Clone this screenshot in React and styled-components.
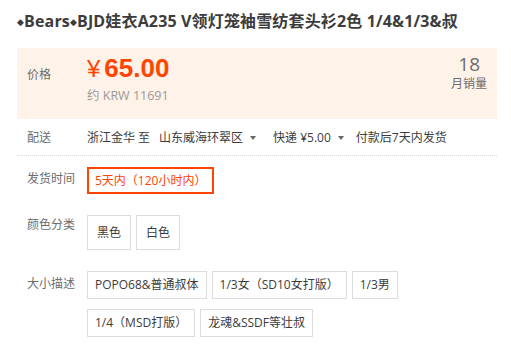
import React from 'react';
import styled, { createGlobalStyle } from 'styled-components';

const GlobalStyle = createGlobalStyle`
    body{
        margin: 0;
        background: #fff;
        font-family: "Open Sans", "Noto Sans CJK SC", sans-serif;
        font-size: 12px;
        color: #3c3c3c;
    }
`;

const sizes = ['POPO68&普通叔体', '1/3女（SD10女打版）', '1/3男', '1/4（MSD打版）', '龙魂&SSDF等壮叔'];

function App() {
    return (
        <>
            <GlobalStyle />
            <Wrap>
                <Title>
                    <Diamond>◆</Diamond>Bears<Diamond>◆</Diamond>BJD娃衣A235 V领灯笼袖雪纺套头衫2色 1/4&amp;1/3&amp;叔
                </Title>
                <PriceBox>
                    <Label pt={18}>价格</Label>
                    <PriceCol>
                        <Price><Rmb>¥</Rmb>65.00</Price>
                        <Krw>约 KRW 11691</Krw>
                    </PriceCol>
                    <Sales>
                        <SalesNum>18</SalesNum>
                        <SalesTxt>月销量</SalesTxt>
                    </Sales>
                </PriceBox>
                <DeliveryRow>
                    <Label>配送</Label>
                    <DeliveryText>
                        <span>浙江金华</span>
                        <To>至</To>
                        <span>山东威海环翠区</span>
                        <Caret />
                        <Express>快递 ¥5.00</Express>
                        <Caret />
                        <Promise>付款后7天内发货</Promise>
                    </DeliveryText>
                </DeliveryRow>
                <Row pt={11}>
                    <Label pt={3}>发货时间</Label>
                    <TimeBox>5天内（120小时内）</TimeBox>
                </Row>
                <Row pt={21}>
                    <Label pt={1}>颜色分类</Label>
                    <Options>
                        <Option big>黑色</Option>
                        <Option big>白色</Option>
                    </Options>
                </Row>
                <Row pt={21}>
                    <Label pt={4}>大小描述</Label>
                    <Options>
                        {sizes.map((s, i) => (
                            <Option key={i}>{s}</Option>
                        ))}
                    </Options>
                </Row>
            </Wrap>
        </>
    );
}

export default App;

const Wrap = styled.div`
    width: 480px;
    padding-left: 17px;
`;

const Title = styled.h1`
    margin: 0;
    padding-top: 10px;
    font-size: 16px;
    line-height: 22px;
    font-weight: 700;
    letter-spacing: 0.15px;
    color: #3c3c3c;
    white-space: nowrap;
`;

const Diamond = styled.span`
    font-family: "DejaVu Sans", sans-serif;
    font-size: 9px;
    vertical-align: 2px;
`;

const PriceBox = styled.div`
    display: flex;
    margin-top: 15px;
    height: 71px;
    padding-right: 10px;
    background: #fff2e8;
`;

const Label = styled.div`
    flex: none;
    width: 60px;
    padding-left: 10px;
    padding-top: ${p => p.pt || 0}px;
    line-height: 18px;
    color: #6c6c6c;
`;

const PriceCol = styled.div`
    display: flex;
    flex-direction: column;
    padding-top: 5px;
`;

const Price = styled.div`
    font-family: "Liberation Sans", Arial, sans-serif;
    font-size: 26px;
    line-height: 30px;
    font-weight: 700;
    color: #ff4400;
`;

const Rmb = styled.span`
    font-size: 24px;
    font-weight: 400;
    margin-right: 4px;
`;

const Krw = styled.div`
    margin-top: 3px;
    line-height: 18px;
    font-size: 12.5px;
    color: #999;
`;

const Sales = styled.div`
    margin-left: auto;
    padding-top: 5px;
    text-align: right;
    color: #6c6c6c;
`;

const SalesNum = styled.div`
    font-size: 19px;
    line-height: 22px;
    padding-right: 7px;
`;

const SalesTxt = styled.div`
    line-height: 18px;
`;

const DeliveryRow = styled.div`
    display: flex;
    padding: 10px 0 8px;
    border-bottom: 1px dotted #d9d9d9;
    line-height: 18px;
`;

const DeliveryText = styled.div`
    display: flex;
    align-items: center;
    white-space: nowrap;
`;

const To = styled.span`
    margin: 0 9px 0 3px;
`;

const Caret = styled.i`
    width: 0;
    height: 0;
    margin-left: 7px;
    border-left: 3.5px solid transparent;
    border-right: 3.5px solid transparent;
    border-top: 4px solid #666;
`;

const Express = styled.span`
    margin-left: 17px;
`;

const Promise = styled.span`
    margin-left: 12px;
`;

const Row = styled.div`
    display: flex;
    padding-top: ${p => p.pt}px;
`;

const TimeBox = styled.div`
    height: 27px;
    box-sizing: border-box;
    padding: 0 6px;
    border: 2px solid #ff4400;
    line-height: 23px;
    color: #ff4400;
`;

const Options = styled.div`
    display: flex;
    flex-wrap: wrap;
    gap: 10px 5px;
    width: 400px;
`;

const Option = styled.div`
    box-sizing: border-box;
    height: ${p => (p.big ? 35 : 28)}px;
    padding: 0 ${p => (p.big ? 9 : 7)}px;
    border: 1px solid #dcdcdc;
    line-height: ${p => (p.big ? 33 : 26)}px;
    color: #3c3c3c;
    background: #fff;
`;
